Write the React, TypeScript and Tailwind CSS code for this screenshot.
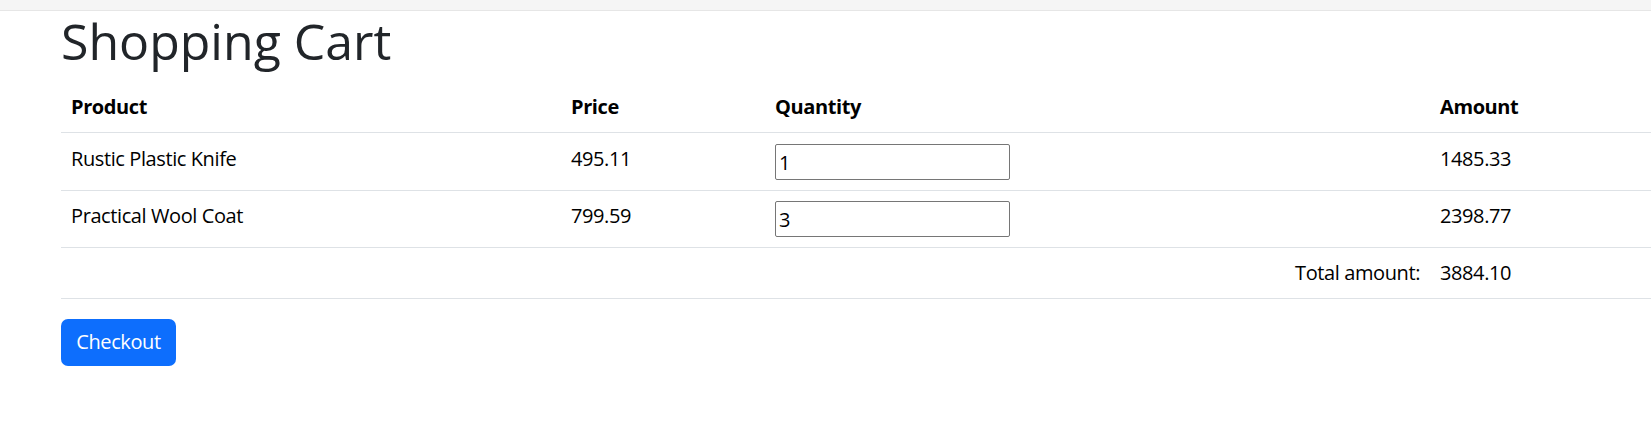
import React from "react";

const items = [
  { name: "Rustic Plastic Knife", price: "495.11", qty: "1", amount: "1485.33" },
  { name: "Practical Wool Coat", price: "799.59", qty: "3", amount: "2398.77" },
];

export default function App() {
  return (
    <div className="min-h-[446px] bg-white text-black font-['Open_Sans',sans-serif] overflow-hidden">
      <div className="h-[11px] bg-[#f5f5f5] border-b border-[#e6e6e6]" />
      <main className="pl-[61px]">
        <h1 className="text-[50px] leading-[60px] mb-[11px] font-medium text-[#212529]">Shopping Cart</h1>
        <table className="table-fixed w-[1650px] text-[20px] leading-[30px] tracking-[-0.4px] border-collapse">
          <colgroup>
            <col className="w-[500px]" />
            <col className="w-[204px]" />
            <col className="w-[665px]" />
            <col />
          </colgroup>
          <thead>
            <tr className="border-b border-[#dee2e6]">
              <th className="h-[50px] px-[10px] text-left font-bold">Product</th>
              <th className="h-[50px] px-[10px] text-left font-bold">Price</th>
              <th className="h-[50px] px-[10px] text-left font-bold">Quantity</th>
              <th className="h-[50px] px-[10px] text-left font-bold">Amount</th>
            </tr>
          </thead>
          <tbody>
            {items.map((item, i) => {
              // second row is a pixel shorter in the reference
              const cell = i === 0 ? "h-[58px] px-[10px] pt-[11px] align-top" : "h-[57px] px-[10px] pt-[10px] align-top";
              return (
                <tr key={item.name} className="border-b border-[#dee2e6]">
                  <td className={cell}>{item.name}</td>
                  <td className={cell}>{item.price}</td>
                  <td className={cell}>
                    <input
                      type="text"
                      defaultValue={item.qty}
                      className="block w-[235px] h-[36px] px-[3px] pt-[2px] border border-[#767676] rounded-[2px] text-[20px] leading-[30px]"
                    />
                  </td>
                  <td className={cell}>{item.amount}</td>
                </tr>
              );
            })}
            <tr className="border-b border-[#dee2e6]">
              <td colSpan={3} className="h-[51px] px-[10px] text-right">
                Total amount:
              </td>
              <td className="h-[51px] px-[10px]">3884.10</td>
            </tr>
          </tbody>
        </table>
        <button className="mt-[20px] h-[47px] w-[115px] bg-[#0d6efd] text-white text-[20px] leading-[30px] tracking-[-0.4px] rounded-[7px]">
          Checkout
        </button>
      </main>
    </div>
  );
}
